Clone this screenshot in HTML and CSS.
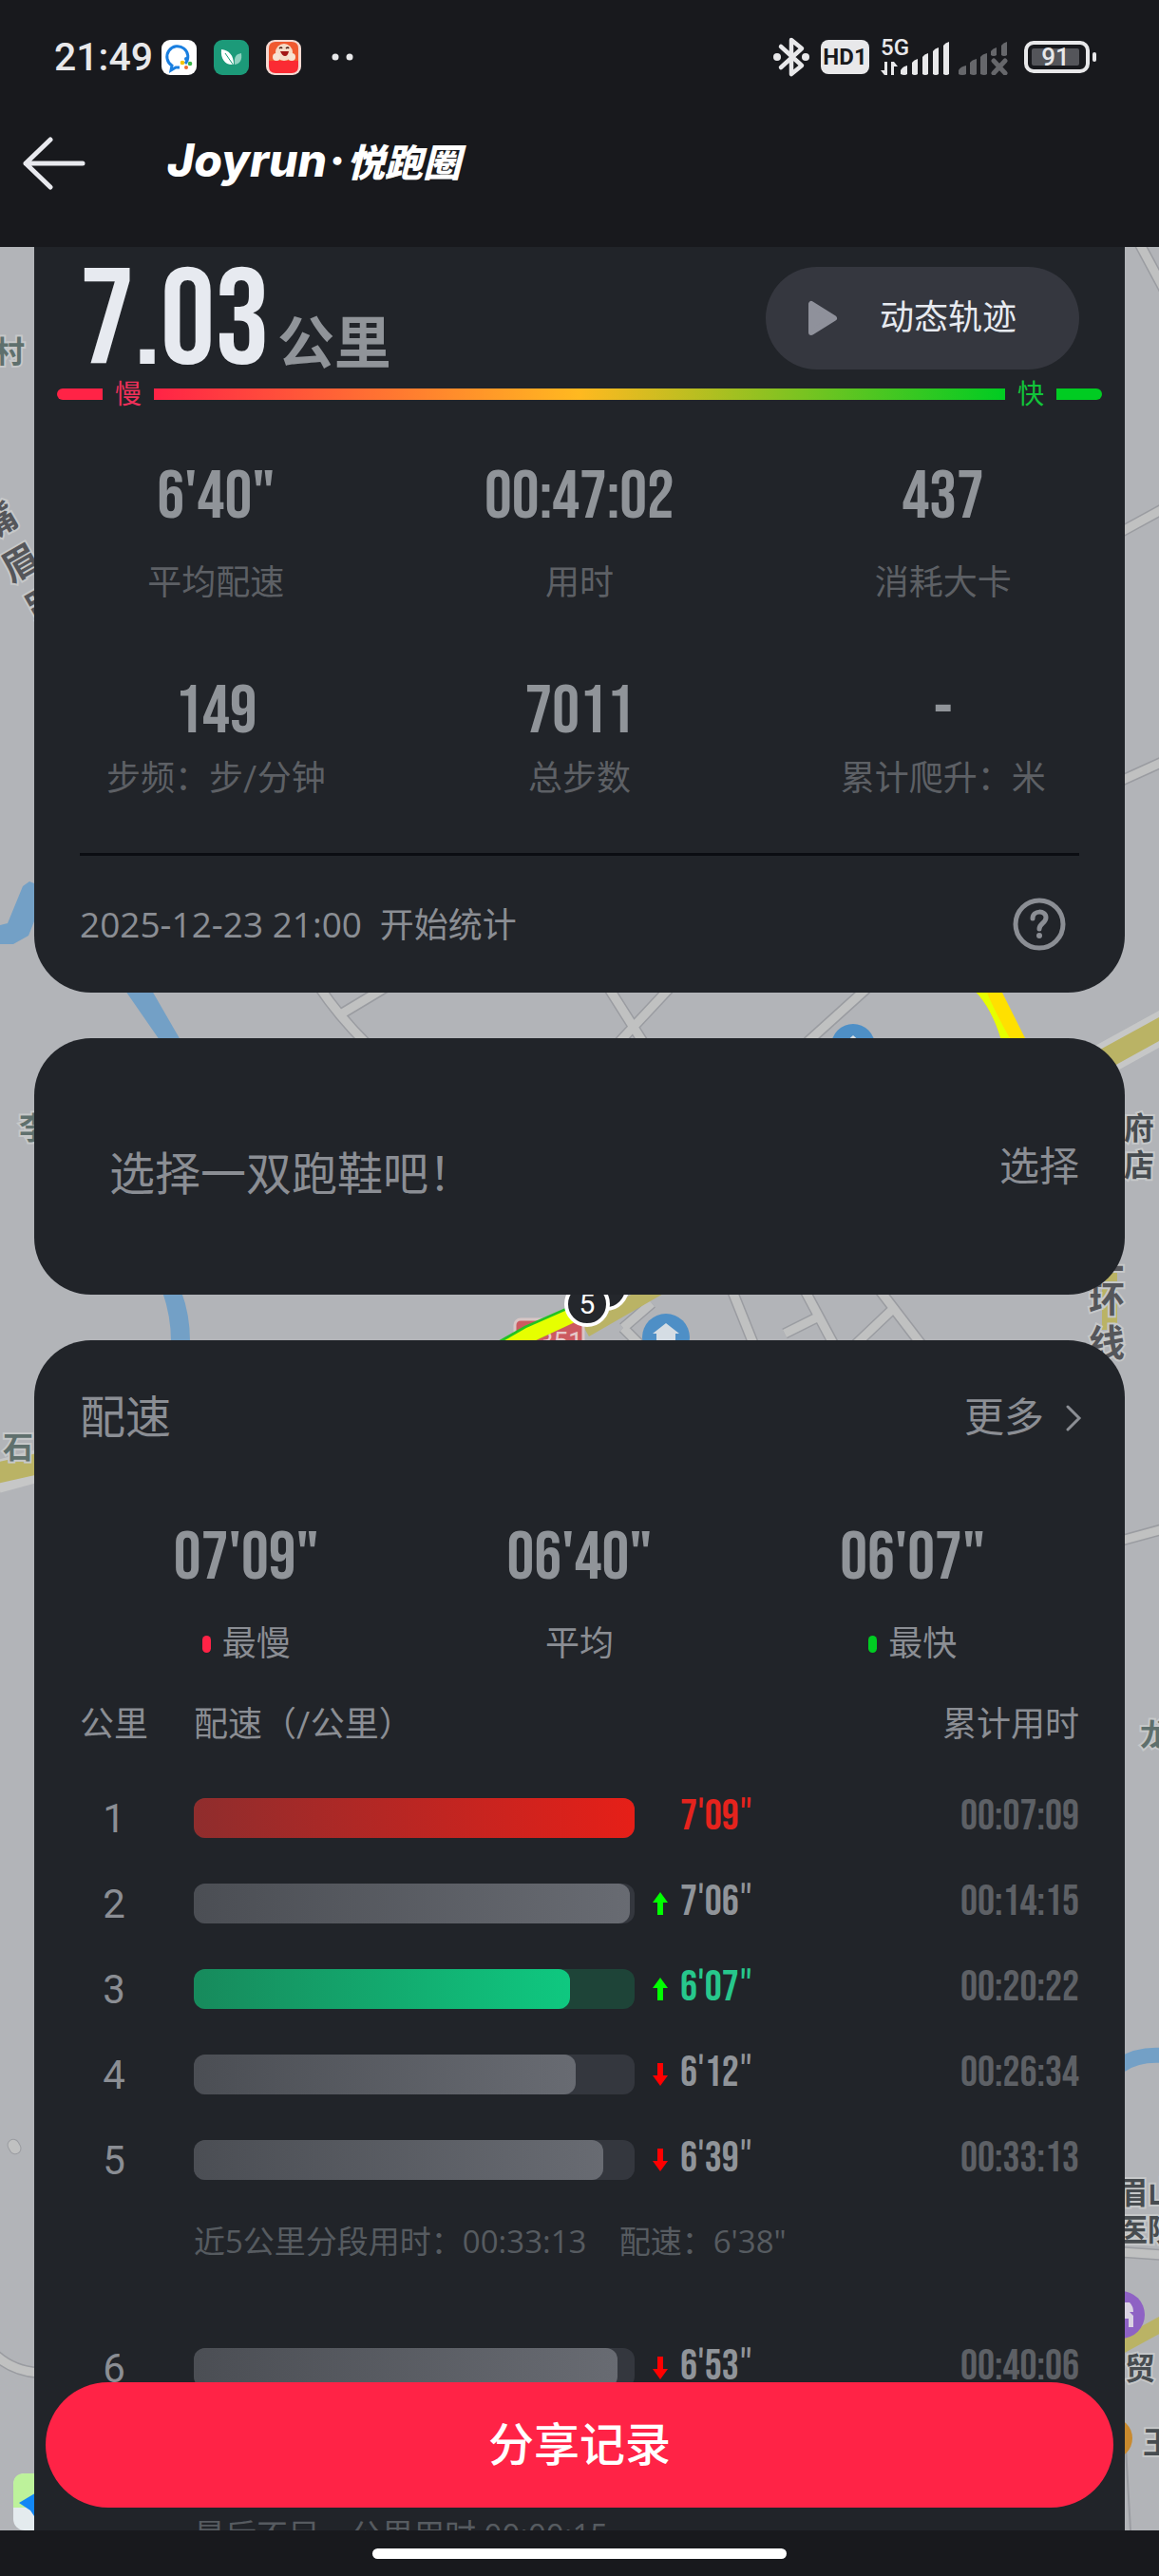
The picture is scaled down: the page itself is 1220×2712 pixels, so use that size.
FILE: index.html
```html
<!DOCTYPE html>
<html lang="zh-CN">
<head>
<meta charset="utf-8">
<meta name="viewport" content="width=device-width, initial-scale=1">
<title>悦跑圈</title>
<link rel="stylesheet" href="styles.css">
</head>
<body>
<header class="top">
  <div class="status">
    <span class="clock">21:49</span>
    <div class="apps">
      <svg width="37" height="37" viewBox="0 0 37 37"><rect width="37" height="37" rx="9" fill="#fff"/><path d="M25 25a11 11 0 1 0-14 2l-1 5 5-3 4 0" fill="none" stroke="#1a7fe0" stroke-width="3"/><circle cx="26" cy="20" r="2" fill="#1a7fe0"/><circle cx="22" cy="24" r="2.300" fill="#f5c400"/><circle cx="30" cy="25" r="2.300" fill="#3bb44a"/><circle cx="26" cy="29" r="2" fill="#ee6b2d"/></svg>
      <svg width="37" height="37" viewBox="0 0 37 37"><rect width="37" height="37" rx="9" fill="#1c9a79"/><path d="M8 10c8 1 13 6 13 16-9 1-14-6-13-16z" fill="#fff"/><path d="M29 14c-5 1-8 3-7 12 6-1 8-5 7-12z" fill="#8fd2c0"/><path d="M12 14l9 13" stroke="#1c9a79" stroke-width="1" fill="none"/></svg>
      <svg width="37" height="37" viewBox="0 0 37 37"><rect width="37" height="37" rx="9" fill="#f3d9d2"/><path d="M3 9q0-7 7-7h17q7 0 7 7v13H3z" fill="#f0592f"/><circle cx="19" cy="13" r="9" fill="#f6dcc8"/><circle cx="11" cy="18" r="4" fill="#f7e3d3"/><circle cx="27" cy="18" r="4" fill="#f7e3d3"/><path d="M14 9q2-2 3 0M21 9q2-2 3 0" stroke="#4a1d14" stroke-width="1.500" fill="none"/><path d="M15 12h9q-1 5-4 5t-5-5z" fill="#a31616"/><path d="M3 22h31v6q0 7-7 7H10q-7 0-7-7z" fill="#fb2b33"/></svg>
    </div>
    <svg class="dots" width="24" height="8" viewBox="0 0 24 8"><circle cx="4" cy="4" r="3.500"/><circle cx="19" cy="4" r="3.500"/></svg>
    <div class="signals">
      <svg width="38" height="44" viewBox="0 0 38 44"><path d="M8 11l22 20-11 9V4l11 9L8 33" fill="none" stroke="#e8e8ea" stroke-width="4.500" stroke-linejoin="round" stroke-linecap="round"/><circle cx="4" cy="22" r="4" fill="#e8e8ea"/><circle cx="34" cy="22" r="4" fill="#e8e8ea"/></svg>
      <span class="hd">HD1</span>
      <div class="cell">
        <span class="net">5G</span>
        <svg width="73" height="37" viewBox="0 0 73 37" fill="#e8e8ea"><path d="M4 23h3v14H4l-4-5h4zM11 37V23h3l4 5h-4v9z"/><path d="M21 36v-4q2-4 7-5v9q-1 1-3 1t-4-1zM33 36V24q2-3 6-4v16q-1 1-3 1t-3-1zM44 36V18q2-3 6-4v22q-1 1-3 1t-3-1zM55 36V12q2-3 6-4v28q-1 1-3 1t-3-1zM66 36V6q2-3 6-4v34q-1 1-3 1t-3-1z"/></svg>
      </div>
      <svg width="52" height="37" viewBox="0 0 52 37" fill="#66676b"><path d="M0 36v-4q2-4 8-5v9q-1 1-4 1t-4-1zM12 36V24q2-3 7-4v16q-1 1-3 1t-4-1zM23 36V18q2-3 7-4v22q-1 1-3 1t-4-1zM34 16v-4q2-3 6-4v8q-1 1-3 1t-3-1zM45 16V6q2-3 6-4v14q-1 1-3 1t-3-1z"/><path d="M37 22l12 13M49 22L37 35" stroke="#66676b" stroke-width="5" stroke-linecap="round"/></svg>
      <span class="battery"><span class="level">91</span></span>
    </div>
  </div>
  <div class="appbar">
    <button class="back" aria-label="返回"><svg width="66" height="56" viewBox="0 0 66 56"><path d="M63 28H3M29 3L3 28l26 25" fill="none" stroke="#e8e9ee" stroke-width="5" stroke-linecap="round" stroke-linejoin="round"/></svg></button>
    <h1 class="brand">Joyrun<span class="brand-dot">·</span><span class="brand-cn">悦跑圈</span></h1>
  </div>
</header>

<main class="page">
  <svg class="map" viewBox="0 260 1220 2404" preserveAspectRatio="xMidYMin slice">
    <rect y="260" width="1220" height="2404" fill="#b2b4b8"/>
    <g fill="none" stroke="#9a9ca1" stroke-width="12">
      <path d="M336 1039q20 30 50 60M360 1067l50-30M640 1039l38 60M706 1039l-56 60M912 1041l-62 56M1196 250l30 56M1180 560l44-24M1180 822l44-20M1180 1622l44-12M770 1357l24 60M925 1357l46 60M940 1378l-40 38M858 1388l-32 16M848 1360l30 56M656 1398l20 20M656 1398l30-26M-4 2480q18 16 44 18M1180 2371l44 3"/>
    </g>
    <g fill="none" stroke="#c0c1c1" stroke-width="9">
      <path d="M336 1039q20 30 50 60M360 1067l50-30M640 1039l38 60M706 1039l-56 60M912 1041l-62 56M1196 250l30 56M1180 560l44-24M1180 822l44-20M1180 1622l44-12M770 1357l24 60M925 1357l46 60M940 1378l-40 38M858 1388l-32 16M848 1360l30 56M656 1398l20 20M656 1398l30-26M-4 2480q18 16 44 18M1180 2371l44 3"/>
    </g>
    <rect x="9" y="2252" width="12" height="16" rx="6" fill="#c0c1c1" stroke="#9a9ca1" transform="rotate(-30 15 2260)"/>
    <path d="M1184 2560l6 104" stroke="#9a9ca1" stroke-width="2"/>
    <g fill="none" stroke="#c6c7c7" stroke-width="34"><path d="M1150 1122l80-44M-4 1555l44-12"/></g>
    <g fill="none" stroke="#bab365" stroke-width="22"><path d="M1150 1122l80-44M-4 1551l44-10"/><path d="M696 1354l-80 46M1168 1330v70M1180 2470l44-24" stroke-width="16"/></g>
    <g fill="#73a0c6">
      <path d="M0 974l8-2 16-39 7-5 5 2v40l-6 15-16 9H0z"/>
      <path d="M132 1043h28l30 52h-22zM171 1360h20q9 24 9 52h-20q0-26-9-52z"/>
    </g>
    <path d="M1180 2174q18-12 44-10" stroke="#73a0c6" stroke-width="16" fill="none"/>
    <rect x="542" y="1389" width="72" height="40" rx="6" fill="#cc5a60" stroke="#d8c6c6" stroke-width="3"/>
    <text x="550" y="1422" class="shield">S351</text>
    <path d="M522 1413l30-17 50-22 14 12-56 27z" fill="#22c322"/>
    <path d="M528 1413l26-15 50-22 14 10-58 27z" fill="#e6ff00"/>
    <path d="M1026 1043h28l26 52h-26q-10-34-28-52z" fill="#ffe000"/>
    <path d="M1026 1043h12q10 24 26 52h-10q-10-34-28-52z" fill="#e6ff00"/>
    <circle cx="638" cy="1356" r="22" fill="#24272c" stroke="#fff" stroke-width="4"/>
    <circle cx="618" cy="1373" r="22" fill="#24272c" stroke="#fff" stroke-width="4"/>
    <text x="618" y="1383" class="km">5</text>
    <g fill="#4e8fc6"><circle cx="898" cy="1101" r="23"/><circle cx="701" cy="1408" r="25"/></g>
    <path d="M888 1099l10-9 10 9zM701 1393l14 11h-4v9h-20v-9h-4z" fill="#d5dde4"/>
    <circle cx="1180" cy="2437" r="25" fill="#8e62c4"/><path d="M1180 2424h9q4 4 4 10h-4l4 4v12h-5v-9h-8z" fill="#d9d2e2"/>
    <circle cx="1170" cy="2567" r="22" fill="#c98a2e"/>
    <g class="place village">
      <text x="-6" y="382">村</text><text x="20" y="1199">李</text><text x="3" y="1535">石</text><text x="1200" y="1838">龙</text>
    </g>
    <g class="place">
      <text x="1183" y="1199">府</text><text x="1183" y="1238">店</text>
      <text x="1176" y="2320">眉山</text><text x="1176" y="2359">医院</text>
      <text x="1184" y="2505">贸</text><text x="1203" y="2583">王</text>
    </g>
    <g class="place road">
      <text x="1146" y="1337">二</text><text x="1146" y="1381">环</text><text x="1146" y="1427">线</text>
      <text transform="translate(-12 570) rotate(-30)">嘴</text><text transform="translate(12 614) rotate(-30)">眉</text><text transform="translate(38 656) rotate(-30)">路</text>
    </g>
    <rect x="14" y="2604" width="60" height="60" rx="12" fill="#e4ebee"/><path d="M14 2640v-24q0-12 12-12h20v36z" fill="#bdf29b"/><path d="M20 2635l20-12v32l-8-12z" fill="#1287f5"/>
  </svg>

  <div class="feed">
    <section class="card summary">
      <div class="headline">
        <p class="distance"><span class="distance-num">7.03</span><span class="distance-unit">公里</span></p>
        <button class="replay"><svg width="32" height="38" viewBox="0 0 32 38"><path d="M4 4v30l24-15z" fill="#8f919b" stroke="#8f919b" stroke-width="6" stroke-linejoin="round"/></svg><span>动态轨迹</span></button>
      </div>
      <div class="scale"><i class="cap slow"></i><span class="slow-text">慢</span><i class="ramp"></i><span class="fast-text">快</span><i class="cap fast"></i></div>
      <dl class="stats roomy">
        <div><dd>6'40"</dd><dt>平均配速</dt></div>
        <div><dd>00:47:02</dd><dt>用时</dt></div>
        <div><dd>437</dd><dt>消耗大卡</dt></div>
      </dl>
      <dl class="stats">
        <div><dd>149</dd><dt>步频：步/分钟</dt></div>
        <div><dd>7011</dd><dt>总步数</dt></div>
        <div><dd>-</dd><dt>累计爬升：米</dt></div>
      </dl>
      <div class="started">
        <span><time>2025-12-23 21:00</time>&nbsp; 开始统计</span>
        <button class="help" aria-label="帮助"><svg width="56" height="56" viewBox="0 0 56 56" fill="none" stroke="#8b8e94"><circle cx="28" cy="28" r="25" stroke-width="5"/><path d="M21 22c0-9 14-9 14-1 0 6-7 6-7 12" stroke-width="5" stroke-linecap="round"/><circle cx="28" cy="40" r="3" fill="#8b8e94" stroke="none"/></svg></button>
      </div>
    </section>

    <section class="card shoes">
      <p>选择一双跑鞋吧！</p>
      <a href="#shoes">选择</a>
    </section>

    <section class="card pace">
      <div class="pace-head">
        <h2>配速</h2>
        <a href="#more">更多<svg width="18" height="28" viewBox="0 0 18 28"><path d="M3 2l12 12L3 26" fill="none" stroke="#8b8e94" stroke-width="3" stroke-linecap="round"/></svg></a>
      </div>
      <dl class="stats bright">
        <div><dd>07'09"</dd><dt><i class="pip slow"></i>最慢</dt></div>
        <div><dd>06'40"</dd><dt>平均</dt></div>
        <div><dd>06'07"</dd><dt><i class="pip fast"></i>最快</dt></div>
      </dl>
      <table class="splits">
        <thead><tr><th class="km-col">公里</th><th class="bar-col">配速（/公里）</th><th></th><th class="sum-col">累计用时</th></tr></thead>
        <tbody>
          <tr class="slowest"><td class="no">1</td><td><div class="bar"><i style="width:100%"></i></div></td><td class="time"><span>7′09″</span></td><td class="sum">00:07:09</td></tr>
          <tr><td class="no">2</td><td><div class="bar"><i style="width:99%"></i></div></td><td class="time up"><svg width="16" height="24" viewBox="0 0 16 24"><path d="M8 0l8 11h-5v13H5V11H0z"/></svg><span>7′06″</span></td><td class="sum">00:14:15</td></tr>
          <tr class="fastest"><td class="no">3</td><td><div class="bar"><i style="width:85.4%"></i></div></td><td class="time up"><svg width="16" height="24" viewBox="0 0 16 24"><path d="M8 0l8 11h-5v13H5V11H0z"/></svg><span>6′07″</span></td><td class="sum">00:20:22</td></tr>
          <tr><td class="no">4</td><td><div class="bar"><i style="width:86.6%"></i></div></td><td class="time down"><svg width="16" height="24" viewBox="0 0 16 24"><path d="M8 24l8-11h-5V0H5v13H0z"/></svg><span>6′12″</span></td><td class="sum">00:26:34</td></tr>
          <tr><td class="no">5</td><td><div class="bar"><i style="width:92.9%"></i></div></td><td class="time down"><svg width="16" height="24" viewBox="0 0 16 24"><path d="M8 24l8-11h-5V0H5v13H0z"/></svg><span>6′39″</span></td><td class="sum">00:33:13</td></tr>
          <tr class="note"><td></td><td colspan="3">近5公里分段用时：00:33:13&nbsp;&nbsp;&nbsp; 配速：6'38"</td></tr>
          <tr><td class="no">6</td><td><div class="bar"><i style="width:96.2%"></i></div></td><td class="time down"><svg width="16" height="24" viewBox="0 0 16 24"><path d="M8 24l8-11h-5V0H5v13H0z"/></svg><span>6′53″</span></td><td class="sum">00:40:06</td></tr>
          <tr class="note last"><td></td><td colspan="3">最后不足一公里用时 00:00:15</td></tr>
        </tbody>
      </table>
    </section>
  </div>

  <button class="share">分享记录</button>
</main>
<footer class="nav"><span class="grip"></span></footer>
</body>
</html>
```
FILE: styles.css
```css
* { box-sizing: border-box; }
body {
  margin: 0;
  height: 100vh;
  display: flex;
  flex-direction: column;
  background: #18191d;
  color: #8b8e94;
  font-family: Roboto, "Noto Sans CJK SC", sans-serif;
  font-size: 36px;
  line-height: 48px;
}
h1, h2, p, dl, dd { margin: 0; }
button { border: 0; padding: 0; background: none; color: inherit; font: inherit; }
a { color: inherit; text-decoration: none; }
svg { display: block; flex: none; }

.top { flex: none; height: 260px; }
.status { display: flex; align-items: center; height: 120px; padding: 0 65px 0 57px; }
.clock { width: 113px; color: #e8e8ea; font-size: 41px; font-weight: 500; }
.apps { display: flex; gap: 18px; }
.dots { margin-left: 32px; fill: #e8e8ea; }
.signals { display: flex; align-items: center; margin-left: auto; gap: 12px; color: #e8e8ea; }
.hd { width: 51px; height: 36px; border-radius: 8px; background: #e8e8ea; color: #18191d; font-size: 24px; font-weight: 700; line-height: 37px; text-align: center; }
.cell { position: relative; margin-right: -3px; }
.net { position: absolute; left: 0; top: -6px; font-size: 24px; font-weight: 500; line-height: 28px; }
.battery { position: relative; width: 69px; height: 34px; margin: 0 8px 0 5px; padding: 4px; border: 4px solid #e8e8ea; border-radius: 10px; }
.battery::after { content: ""; position: absolute; right: -11px; top: 8px; width: 4px; height: 10px; border-radius: 2px; background: #e8e8ea; }
.level { display: block; width: 50px; height: 18px; border-radius: 2px; background: #54555a; font-size: 26px; font-weight: 500; line-height: 19px; text-align: center; }
.appbar { display: flex; align-items: center; height: 104px; padding-left: 24px; }
.back { width: 66px; margin-right: 86px; }
.brand { color: #fff; font-family: Inter, "Noto Sans CJK SC", sans-serif; font-size: 48px; font-style: italic; font-weight: 800; line-height: 52px; padding-bottom: 4px; }
.brand-dot { margin: 0 2px; }
.brand-cn { font-size: 40px; font-weight: 900; }

.page { position: relative; flex: 1; min-height: 0; overflow: hidden; }
.map { position: absolute; inset: 0; width: 100%; height: 100%; }
.place { font-size: 32px; font-weight: 700; fill: #474c50; stroke: #c6c8c9; stroke-width: 4px; paint-order: stroke; }
.village { fill: #5f706d; }
.road { font-size: 38px; fill: #55565a; }
.shield { fill: #e6c9c9; font-size: 28px; }
.km { fill: #fff; font-size: 30px; text-anchor: middle; }

.feed { position: relative; display: flex; flex-direction: column; gap: 48px; padding: 0 36px; }
.card { flex: none; border-radius: 60px; background: #212429; padding: 0 48px; }

.summary { border-radius: 0 0 60px 60px; }
.headline { display: flex; justify-content: space-between; padding-top: 21px; }
.distance { display: flex; align-items: baseline; gap: 8px; height: 108px; padding-top: 5px; line-height: 108px; }
.distance-num, .stats dd, .time, .sum { font-family: "Bebas Neue", "Roboto Condensed", Roboto, sans-serif; }
.distance-num { color: #e7eaf0; font-size: 144px; }
.distance-unit { color: #909499; font-size: 60px; font-weight: 700; }
.replay { display: flex; align-items: center; width: 330px; height: 108px; padding: 0 66px 0 44px; justify-content: space-between; border-radius: 54px; background: #35373f; color: #e7eaf0; }
.scale { display: flex; align-items: center; gap: 12px; margin: 12px -24px 0; height: 28px; font-size: 28px; line-height: 28px; }
.scale span { padding: 2px 1px 0; }
.cap { width: 48px; height: 12px; }
.cap.slow { border-radius: 6px 0 0 6px; }
.cap.fast { border-radius: 0 6px 6px 0; }
.slow { background: #ff2346; }
.fast { background: #00cc22; }
.slow-text { color: #f0305a; }
.fast-text { color: #12c43a; }
.ramp { flex: 1; height: 12px; background: linear-gradient(90deg, #ff2346, #ffb920 50%, #00cc22); }

.stats { display: grid; grid-template-columns: repeat(3, 1fr); margin: 0 -48px; text-align: center; }
.stats dd { padding-top: 1px; color: #909499; font-size: 72px; line-height: 72px; }
.stats > div { display: flex; flex-direction: column; gap: 10px; }
.stats dt { color: #5d6065; }
.roomy { margin-top: 58px; margin-bottom: 75px; }
.roomy > div { gap: 30px; }
.started { display: flex; align-items: center; justify-content: space-between; height: 147px; margin-top: 54px; padding-right: 14px; border-top: 3px solid #0b0d12; font-family: "Open Sans", "Noto Sans CJK SC", sans-serif; }
.started time { font-size: 37px; }

.shoes { display: flex; justify-content: space-between; height: 270px; padding-left: 79px; }
.shoes p { padding-top: 114px; font-size: 48px; line-height: 60px; }
.shoes a { padding-top: 106px; font-size: 42px; line-height: 60px; }

.pace { border-radius: 60px 60px 0 0; padding-bottom: 60px; }
.pace-head { display: flex; align-items: center; justify-content: space-between; padding-top: 52px; }
.pace-head h2 { font-size: 48px; font-weight: 400; line-height: 60px; }
.pace-head a { display: flex; align-items: center; gap: 22px; margin-right: -3px; font-size: 42px; line-height: 60px; }
.bright { margin: 81px 0 0; }
.bright > div { gap: 30px; }
.bright dt { display: flex; justify-content: center; align-items: center; gap: 12px; color: #8b8e94; }
.pip { width: 9px; height: 18px; border-radius: 5px; }

.splits { width: 100%; margin-top: 4px; border-collapse: collapse; table-layout: fixed; }
.splits th { height: 110px; padding: 4px 0 0; font-weight: 400; text-align: left; white-space: nowrap; }
.splits td { height: 90px; padding: 0; }
.km-col { width: 120px; }
.bar-col { width: 464px; }
.splits .sum-col { text-align: right; }
.splits .no { padding: 2px 48px 0 0; font-size: 42px; text-align: center; }
.bar { height: 42px; border-radius: 12px; background: #34373e; }
.bar i { display: block; height: 42px; border-radius: 12px; background: linear-gradient(90deg, #4b4e54, #686b72); }
.slowest .bar i { background: linear-gradient(90deg, #8f2d2d, #e61f18); }
.fastest .bar { background: #1e4438; }
.fastest .bar i { background: linear-gradient(90deg, #178a5c, #0fc880); }
.splits .time { position: relative; padding: 0 0 3px 48px; color: #909499; font-size: 45px; }
.splits .sum { padding-bottom: 3px; color: #5d6065; font-size: 45px; text-align: right; }
.time svg { position: absolute; left: 19px; top: 33px; }
.up svg { fill: #0f0; }
.down svg { fill: #f00; }
.splits .slowest .time { color: #e5231d; }
.splits .fastest .time { color: #27c78c; }
.splits .note td { height: 129px; padding-top: 17px; vertical-align: top; color: #565b60; font-family: "Open Sans", "Noto Sans CJK SC", sans-serif; font-size: 33px; }
.splits .last td { padding-top: 107px; }

.share { position: absolute; left: 48px; right: 48px; bottom: 24px; height: 132px; padding-top: 2px; border-radius: 66px; background: #ff2346; color: #fff; font-size: 48px; font-weight: 500; }
.nav { flex: none; display: flex; justify-content: center; height: 48px; padding-top: 19px; }
.grip { width: 436px; height: 11px; border-radius: 6px; background: #fff; }
```
